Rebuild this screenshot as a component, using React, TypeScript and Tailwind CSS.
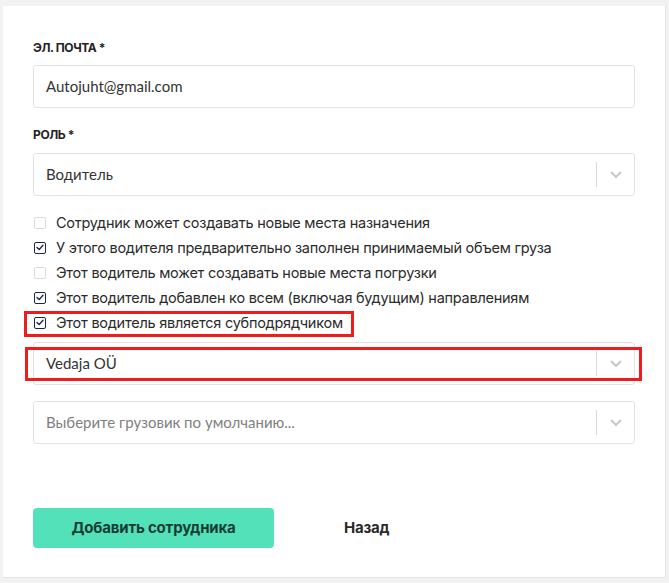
import React from "react";

const sans = { fontFamily: "Inter, 'Liberation Sans', Arial, sans-serif" };
const lato = { fontFamily: "Lato, 'Open Sans', Arial, sans-serif" };

function Chevron() {
  return (
    <svg width="12" height="8" viewBox="0 0 12 8" fill="none">
      <path d="M1.5 1.5 L6 6 L10.5 1.5" stroke="#c8c8c8" strokeWidth="2" strokeLinecap="round" strokeLinejoin="round" />
    </svg>
  );
}

function Select({ value, placeholder }: { value?: string; placeholder?: string }) {
  return (
    <div className="flex h-[43px] items-center rounded-[3px] border border-[#e3e3e3] bg-white">
      <div
        className={`flex-1 pl-[12px] text-[15px] ${value ? "text-[#333]" : "text-[#808080]"}`}
        style={lato}
      >
        {value ?? placeholder}
      </div>
      <div className="h-[25px] w-px bg-[#d9d9d9]" />
      <div className="flex w-[37px] items-center justify-center">
        <Chevron />
      </div>
    </div>
  );
}

function Check({ checked, label }: { checked: boolean; label: string }) {
  return (
    <div className="flex h-[25px] items-center">
      <div
        className={`ml-px flex h-[12px] w-[12px] items-center justify-center rounded-[2px] border ${
          checked ? "border-[#1d2747]" : "border-[#dcdcdc]"
        }`}
      >
        {checked && (
          <svg width="8" height="7" viewBox="0 0 8 7" fill="none">
            <path d="M1 3.5 L3.2 5.6 L7 1.2" stroke="#1d2747" strokeWidth="1.4" strokeLinecap="round" strokeLinejoin="round" />
          </svg>
        )}
      </div>
      <span className="ml-[10px] text-[14.5px] tracking-[-0.25px] text-[#2b2b2b]" style={sans}>
        {label}
      </span>
    </div>
  );
}

export default function App() {
  return (
    <div className="min-h-[583px] w-[669px] bg-[#f2f2f2] pl-[3px] pt-[6px]">
      <div className="h-[572px] w-[663px] border-r border-b border-[#e4e4e4] bg-white px-[30px] pt-[34px]">
        <div className="text-[12px] font-bold uppercase leading-[16px] tracking-[-0.4px] text-[#222]" style={sans}>
          Эл. почта *
        </div>
        <div className="mt-[9px] flex h-[43px] items-center rounded-[3px] border border-[#e3e3e3] pl-[12px] text-[15px] text-[#333]" style={lato}>
          Autojuht@gmail.com
        </div>

        <div className="mt-[19px] text-[12px] font-bold uppercase leading-[16px] tracking-[-0.4px] text-[#222]" style={sans}>
          Роль *
        </div>
        <div className="mt-[10px]">
          <Select value="Водитель" />
        </div>

        <div className="mt-[14px] flex flex-col">
          <Check checked={false} label="Сотрудник может создавать новые места назначения" />
          <Check checked={true} label="У этого водителя предварительно заполнен принимаемый объем груза" />
          <Check checked={false} label="Этот водитель может создавать новые места погрузки" />
          <Check checked={true} label="Этот водитель добавлен ко всем (включая будущим) направлениям" />
          <div className="relative">
            <Check checked={true} label="Этот водитель является субподрядчиком" />
            <div className="pointer-events-none absolute left-[-9px] top-[1px] h-[26px] w-[330px] border-[3px] border-[#f01c1c]" />
          </div>
        </div>

        <div className="relative mt-[7px]">
          <Select value="Vedaja OÜ" />
          <div className="pointer-events-none absolute left-[-8px] top-[5px] h-[34px] w-[617px] border-[3px] border-[#f01c1c]" />
        </div>

        <div className="mt-[16px]">
          <Select placeholder="Выберите грузовик по умолчанию..." />
        </div>

        <div className="mt-[64px] flex items-center">
          <button
            className="flex h-[40px] w-[241px] items-center justify-center rounded-[4px] bg-[#52e1b9] text-[15px] font-bold tracking-[-0.2px] text-[#173d33]"
            style={sans}
          >
            Добавить сотрудника
          </button>
          <span className="ml-[70px] text-[15px] font-bold tracking-[-0.2px] text-[#2a2a2a]" style={sans}>
            Назад
          </span>
        </div>
      </div>
    </div>
  );
}
